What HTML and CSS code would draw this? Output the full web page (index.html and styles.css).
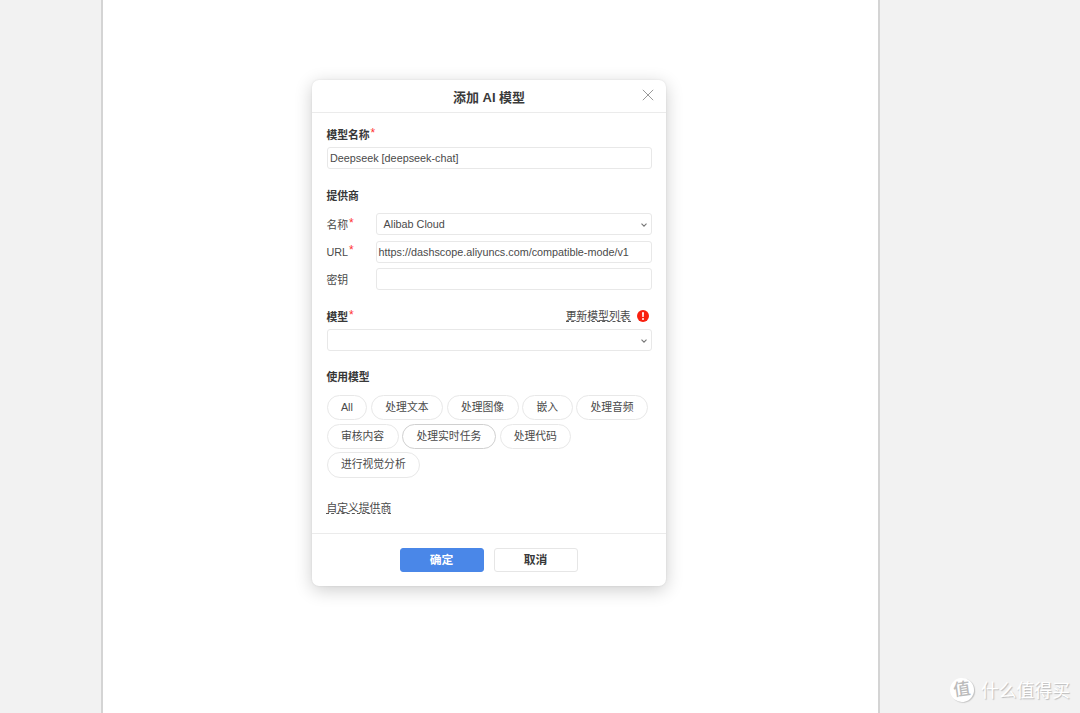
FILE: index.html
```html
<!DOCTYPE html>
<html lang="zh-CN">
<head>
<meta charset="utf-8">
<title>添加 AI 模型</title>
<link rel="stylesheet" href="styles.css">
</head>
<body>
<main class="sheet">
  <section class="dialog">
    <header class="dialog-header">
      <h1 class="title">添加 AI 模型</h1>
      <svg class="close" viewBox="0 0 12 12" width="12" height="12"><path d="M.8.8l10.4 10.4M11.2.8L.8 11.2" fill="none" stroke="#999" stroke-width="1"/></svg>
    </header>
    <div class="dialog-body">
      <div class="label strong">模型名称<span class="req">*</span></div>
      <div class="field">Deepseek [deepseek-chat]</div>
      <div class="label strong provider">提供商</div>
      <div class="provider-grid">
        <div class="label cjk">名称<span class="req">*</span></div>
        <div class="field select wide-pad"><span>Alibab Cloud</span><svg class="chevron" viewBox="0 0 6 4" width="6" height="4"><path d="M.5.6L3 3.1 5.5.6" fill="none" stroke="#777" stroke-width="1.1"/></svg></div>
        <div class="label">URL<span class="req">*</span></div>
        <div class="field">https://dashscope.aliyuncs.com/compatible-mode/v1</div>
        <div class="label cjk">密钥</div>
        <div class="field"></div>
      </div>
      <div class="model-row">
        <div class="label strong cjk">模型<span class="req">*</span></div>
        <div class="update"><span class="link">更新模型列表</span><svg class="alert" viewBox="0 0 12 12" width="12" height="12"><circle cx="6" cy="6" r="6" fill="#f9200f"/><path d="M5 2.2h2L6.7 6.9H5.3z" fill="#fff"/><circle cx="6" cy="8.9" r="1" fill="#fff"/></svg></div>
      </div>
      <div class="field select"><span></span><svg class="chevron" viewBox="0 0 6 4" width="6" height="4"><path d="M.5.6L3 3.1 5.5.6" fill="none" stroke="#777" stroke-width="1.1"/></svg></div>
      <div class="label strong usage">使用模型</div>
      <div class="pills">
        <span class="pill">All</span><span class="pill">处理文本</span><span class="pill">处理图像</span><span class="pill">嵌入</span><span class="pill">处理音频</span><span class="pill">审核内容</span><span class="pill active">处理实时任务</span><span class="pill">处理代码</span><span class="pill">进行视觉分析</span>
      </div>
      <div class="custom"><span class="link">自定义提供商</span></div>
    </div>
    <footer class="dialog-footer">
      <div class="button primary">确定</div>
      <div class="button">取消</div>
    </footer>
  </section>
</main>
<div class="watermark"><span class="badge">值</span><span class="brand">什么值得买</span></div>
</body>
</html>
```
FILE: styles.css
```css
* { box-sizing: border-box; }
body {
  margin: 0;
  height: 713px;
  overflow: hidden;
  background: #f2f2f2;
  color: #4a4a4a;
  font: 10.8px/16px "Liberation Sans", "Noto Sans CJK SC", sans-serif;
}
.sheet {
  width: 779px;
  height: 713px;
  margin-left: 101px;
  padding: 80px 0 0 209px;
  background: #fff;
  border: solid #d4d4d4;
  border-width: 0 2px;
}
.dialog {
  width: 354px;
  height: 506px;
  display: flex;
  flex-direction: column;
  background: #fff;
  border-radius: 7px;
  box-shadow: 0 4px 18px rgba(0, 0, 0, .2), 0 0 2px rgba(0, 0, 0, .1);
}
.dialog-header {
  height: 33px;
  display: flex;
  align-items: center;
  padding: 1px 12px 0 24px;
  border-bottom: 1px solid #ebebeb;
}
.title { flex: 1; margin: 2px 0 0; text-align: center; font-size: 13px; line-height: 18px; color: #3a3a3a; }
.close { margin-top: -3px; }
.dialog-body { height: 420px; padding: 14px 14px 0 15px; }
.label { height: 16px; margin-left: -.6px; white-space: nowrap; }
.cjk { padding-top: 1px; }
.strong { font-weight: bold; color: #383838; }
.req { color: #f33; font-size: 12px; line-height: 1; font-weight: normal; position: relative; top: -2px; margin-left: 1px; }
.field {
  height: 22px;
  padding: 0 2px;
  border: 1px solid #e8e8e8;
  border-radius: 3px;
  line-height: 20px;
  white-space: nowrap;
}
.dialog-body > .label + .field { margin-top: 4px; }
.select { display: flex; align-items: center; justify-content: space-between; padding-right: 4px; }
.wide-pad { padding-left: 7px; }
.chevron { margin-top: 2px; }
.provider { margin-top: 19px; }
.provider-grid {
  display: grid;
  grid-template-columns: 48.6px 1fr;
  row-gap: 5.5px;
  align-items: center;
  margin-top: 9px;
}
.model-row { display: flex; justify-content: space-between; margin: 18px 0 5px; }
.update { display: flex; gap: 6px; padding-right: 3.5px; }
.alert { margin-top: 2px; }
.link { display: inline-block; height: 14px; padding-top: 1px; line-height: 15px; border-bottom: 1px dashed #555; }
.usage { margin-top: 18px; }
.pills { display: flex; flex-wrap: wrap; gap: 3.5px 3.8px; margin: 10px 0 0 -.2px; }
.pill {
  height: 25.2px;
  padding: 0 13.5px 0 13.1px;
  border: 1px solid #e8e8e8;
  border-radius: 13px;
  line-height: 23.6px;
}
.active { border-color: #d0d0d0; }
.custom { margin: 22px 0 0 -.6px; }
.dialog-footer {
  height: 53px;
  display: flex;
  justify-content: center;
  gap: 10px;
  padding-top: 14px;
  border-top: 1px solid #ebebeb;
}
.button {
  width: 84px;
  height: 24px;
  padding-right: 1px;
  border: 1px solid #e6e6e6;
  border-radius: 3px;
  text-align: center;
  font-size: 11.8px;
  line-height: 22px;
  font-weight: bold;
  color: #383838;
}
.primary { background: #4a87e8; border-color: #4a87e8; color: #fff; }
.watermark {
  position: absolute;
  left: 950px;
  top: 678px;
  display: flex;
  align-items: flex-start;
  gap: 7px;
  color: #fff;
}
.badge {
  width: 24px;
  height: 24px;
  border-radius: 50%;
  background: #fff;
  box-shadow: 1px 1px 1px #c4c4c4;
  color: #bbb;
  font-size: 17px;
  font-weight: 500;
  line-height: 23px;
  text-align: center;
  transform: rotate(-8deg);
}
.brand { padding-top: 1px; font-size: 17.8px; line-height: 24px; text-shadow: 1px 1px 1px #bbb; white-space: nowrap; }
```
